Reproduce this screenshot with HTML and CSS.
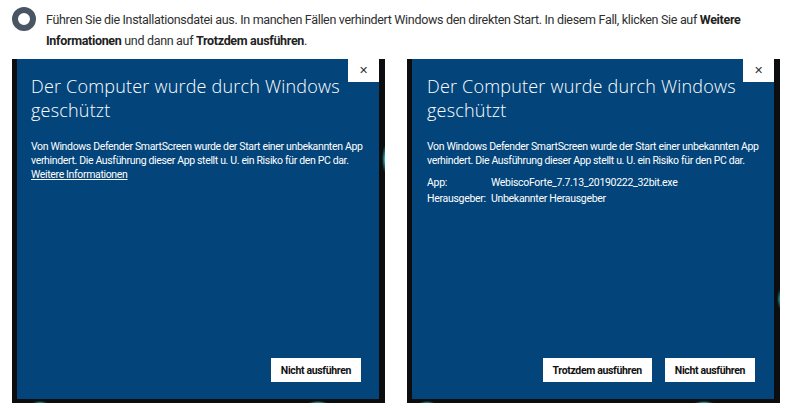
FILE: index.html
```html
<!DOCTYPE html>
<html lang="de">
<head>
    <meta charset="UTF-8">
    <meta name="viewport" content="width=device-width, initial-scale=1.0">
    <title>Installation starten</title>
    <link rel="stylesheet" href="styles.css">
</head>
<body>

    <div class="step">
        <span class="step-dot"></span>
        <p class="step-text">Führen Sie die Installationsdatei aus. In manchen Fällen verhindert Windows den direkten Start. In diesem Fall, klicken Sie auf <strong>Weitere</strong> <strong>Informationen</strong> und dann auf <strong>Trotzdem ausführen</strong>.</p>
    </div>

    <div class="shots">
        <!-- Schritt 1: SmartScreen blockiert -->
        <div class="frame frame-left">
            <div class="dialog">
                <div class="dialog-top">
                    <h2 class="dialog-title">Der Computer wurde durch Windows geschützt</h2>
                    <span class="close">&#x2715;</span>
                </div>
                <p class="dialog-text">Von Windows Defender SmartScreen wurde der Start einer unbekannten App verhindert. Die Ausführung dieser App stellt u. U. ein Risiko für den PC dar.<br><a href="#" class="more">Weitere Informationen</a></p>
                <div class="actions">
                    <button class="btn">Nicht ausführen</button>
                </div>
            </div>
        </div>

        <!-- Schritt 2: nach Klick auf Weitere Informationen -->
        <div class="frame frame-right">
            <div class="dialog">
                <div class="dialog-top">
                    <h2 class="dialog-title">Der Computer wurde durch Windows geschützt</h2>
                    <span class="close">&#x2715;</span>
                </div>
                <p class="dialog-text">Von Windows Defender SmartScreen wurde der Start einer unbekannten App verhindert. Die Ausführung dieser App stellt u. U. ein Risiko für den PC dar.</p>
                <div class="details">
                    <span>App:</span>
                    <span>WebiscoForte_7.7.13_20190222_32bit.exe</span>
                    <span>Herausgeber:</span>
                    <span>Unbekannter Herausgeber</span>
                </div>
                <div class="actions">
                    <button class="btn">Trotzdem ausführen</button>
                    <button class="btn">Nicht ausführen</button>
                </div>
            </div>
        </div>
    </div>

</body>
</html>
```

FILE: styles.css
```css
body {
    margin: 0;
    background-color: #fff;
    font-family: Roboto, "Liberation Sans", sans-serif;
    color: #2e2e2e;
}
.step {
    display: flex;
    align-items: flex-start;
    padding: 7px 0 0 12px;
}
.step-dot {
    flex: none;
    width: 12px;
    height: 12px;
    border: 6.5px solid #4a5563;
    border-radius: 50%;
    background-color: #fff;
}
.step-text {
    margin: 2px 0 0 10px;
    width: 712px;
    font-size: 12.5px;
    line-height: 21px;
    letter-spacing: -0.32px;
}
.step-text strong {
    color: #222;
}
.shots {
    display: flex;
    gap: 22px;
    padding: 8px 0 0 12px;
}
.frame {
    padding: 0 6px 4px 5px;
    background-color: #0b0d0e;
}
.frame-left {
    background:
        radial-gradient(ellipse 3px 14px at 100% 100px, #3cc4c4, transparent),
        radial-gradient(ellipse 8px 2px at 28px 100%, #239a9a, transparent),
        radial-gradient(ellipse 10px 2px at 306px 100%, #2fb0b0, transparent),
        #0b0d0e;
}
.frame-right {
    background:
        radial-gradient(ellipse 10px 2px at 297px 100%, #2fb0b0, transparent),
        radial-gradient(ellipse 8px 2px at 20px 100%, #239a9a, transparent),
        radial-gradient(ellipse 3px 10px at 100% 240px, #239a9a, transparent),
        #0b0d0e;
}
.dialog {
    display: flex;
    flex-direction: column;
    width: 362px;
    height: 340px;
    background-color: #03457b;
    color: #fff;
}
.dialog-top {
    display: flex;
    align-items: flex-start;
}
.dialog-title {
    flex: 1;
    margin: 15px 0 0 14px;
    font-family: "Open Sans", "Liberation Sans", sans-serif;
    font-size: 18px;
    font-weight: 300;
    line-height: 24px;
    letter-spacing: 0.2px;
}
.frame-right .dialog-title {
    margin-left: 15px;
}
.close {
    flex: none;
    width: 31px;
    height: 23px;
    background-color: #fff;
    color: #333;
    font-size: 11px;
    line-height: 23px;
    text-align: center;
}
.dialog-text {
    margin: 18px 0 0 14px;
    font-size: 10.5px;
    line-height: 14px;
    letter-spacing: -0.35px;
}
.frame-right .dialog-text {
    margin-left: 15px;
}
.more {
    color: #fff;
}
.details {
    display: grid;
    grid-template-columns: 64px auto;
    margin: 7px 0 0 15px;
    font-size: 10.5px;
    line-height: 16px;
    letter-spacing: -0.3px;
}
.actions {
    display: flex;
    justify-content: flex-end;
    gap: 13px;
    margin-top: auto;
    padding: 0 18px 17px 0;
}
.frame-right .actions {
    padding-right: 19px;
}
.btn {
    height: 24px;
    padding: 0 10px;
    border: none;
    background-color: #fff;
    color: #111;
    font-family: Roboto, "Liberation Sans", sans-serif;
    font-size: 10.5px;
    font-weight: bold;
    letter-spacing: -0.35px;
}
```
